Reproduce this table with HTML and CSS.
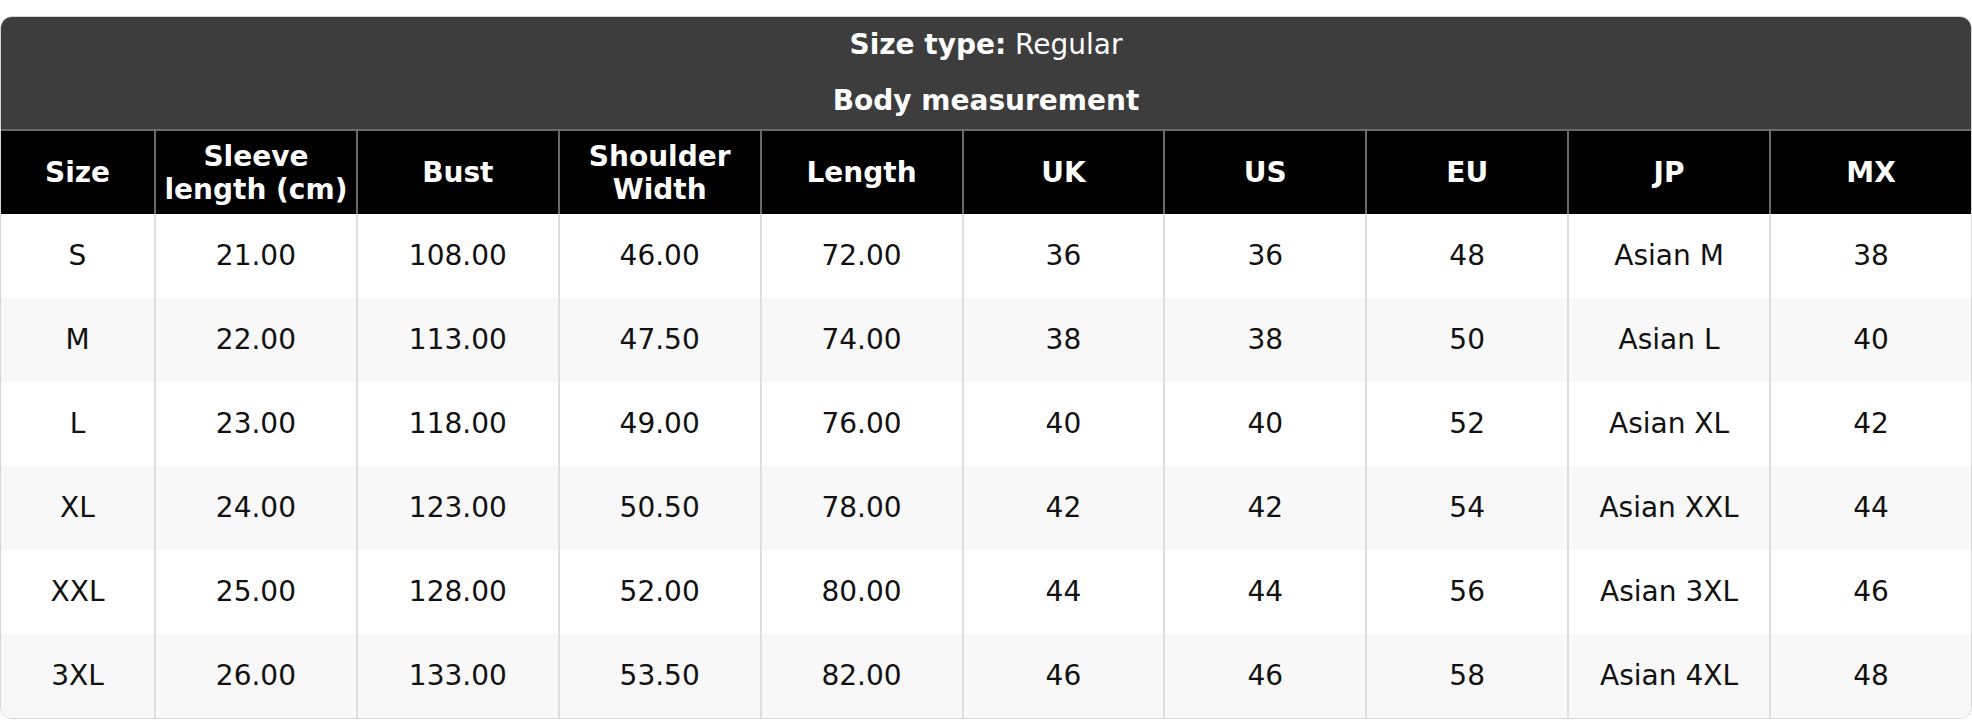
FILE: index.html
```html
<!DOCTYPE html>
<html lang="en">
<head>
<meta charset="utf-8">
<title>Size chart</title>
<link rel="stylesheet" href="styles.css">
</head>
<body>
<div class="chart">
  <table class="size-table">
    <colgroup>
      <col class="col-size">
      <col><col><col><col><col><col><col><col><col>
    </colgroup>
    <thead>
      <tr class="title-row"><th colspan="10"><strong>Size type:</strong> <span class="light">Regular</span></th></tr>
      <tr class="title-row"><th colspan="10"><strong>Body measurement</strong></th></tr>
      <tr class="head-row">
        <th>Size</th>
        <th>Sleeve length (cm)</th>
        <th>Bust</th>
        <th>Shoulder Width</th>
        <th>Length</th>
        <th>UK</th>
        <th>US</th>
        <th>EU</th>
        <th>JP</th>
        <th>MX</th>
      </tr>
    </thead>
    <tbody>
      <tr><td>S</td><td>21.00</td><td>108.00</td><td>46.00</td><td>72.00</td><td>36</td><td>36</td><td>48</td><td>Asian M</td><td>38</td></tr>
      <tr><td>M</td><td>22.00</td><td>113.00</td><td>47.50</td><td>74.00</td><td>38</td><td>38</td><td>50</td><td>Asian L</td><td>40</td></tr>
      <tr><td>L</td><td>23.00</td><td>118.00</td><td>49.00</td><td>76.00</td><td>40</td><td>40</td><td>52</td><td>Asian XL</td><td>42</td></tr>
      <tr><td>XL</td><td>24.00</td><td>123.00</td><td>50.50</td><td>78.00</td><td>42</td><td>42</td><td>54</td><td>Asian XXL</td><td>44</td></tr>
      <tr><td>XXL</td><td>25.00</td><td>128.00</td><td>52.00</td><td>80.00</td><td>44</td><td>44</td><td>56</td><td>Asian 3XL</td><td>46</td></tr>
      <tr><td>3XL</td><td>26.00</td><td>133.00</td><td>53.50</td><td>82.00</td><td>46</td><td>46</td><td>58</td><td>Asian 4XL</td><td>48</td></tr>
    </tbody>
  </table>
</div>
</body>
</html>
```
FILE: styles.css
```css
html, body {
  margin: 0;
  padding: 0;
  background: #ffffff;
}

body {
  font-family: "DejaVu Sans", Verdana, sans-serif;
  font-size: 28px;
  color: #111111;
  padding-top: 16px;
}

.chart {
  width: 1972px;
  box-sizing: border-box;
  border: 1px solid #d6d6d6;
  border-radius: 12px;
  overflow: hidden;
  background: #ffffff;
}

.size-table {
  width: 100%;
  table-layout: fixed;
  border-collapse: separate;
  border-spacing: 0;
}

.col-size {
  width: 153px;
}

.title-row th {
  background: #3d3d3d;
  color: #ffffff;
  font-weight: normal;
  line-height: 34px;
  padding: 11px 0;
  text-align: center;
}

.title-row strong {
  font-weight: bold;
}

.head-row th {
  background: #000000;
  color: #ffffff;
  font-weight: bold;
  line-height: 33px;
  padding: 8.5px 4px;
  text-align: center;
  border-top: 2px solid #6a6a6a;
  border-left: 2px solid #6a6a6a;
}

.head-row th:first-child {
  border-left: none;
}

tbody td {
  text-align: center;
  line-height: 34px;
  padding: 25px 4px;
  border-left: 2px solid #dedede;
  white-space: nowrap;
}

tbody td:first-child {
  border-left: none;
}

tbody tr:nth-child(even) td {
  background: #f8f8f8;
}
```
